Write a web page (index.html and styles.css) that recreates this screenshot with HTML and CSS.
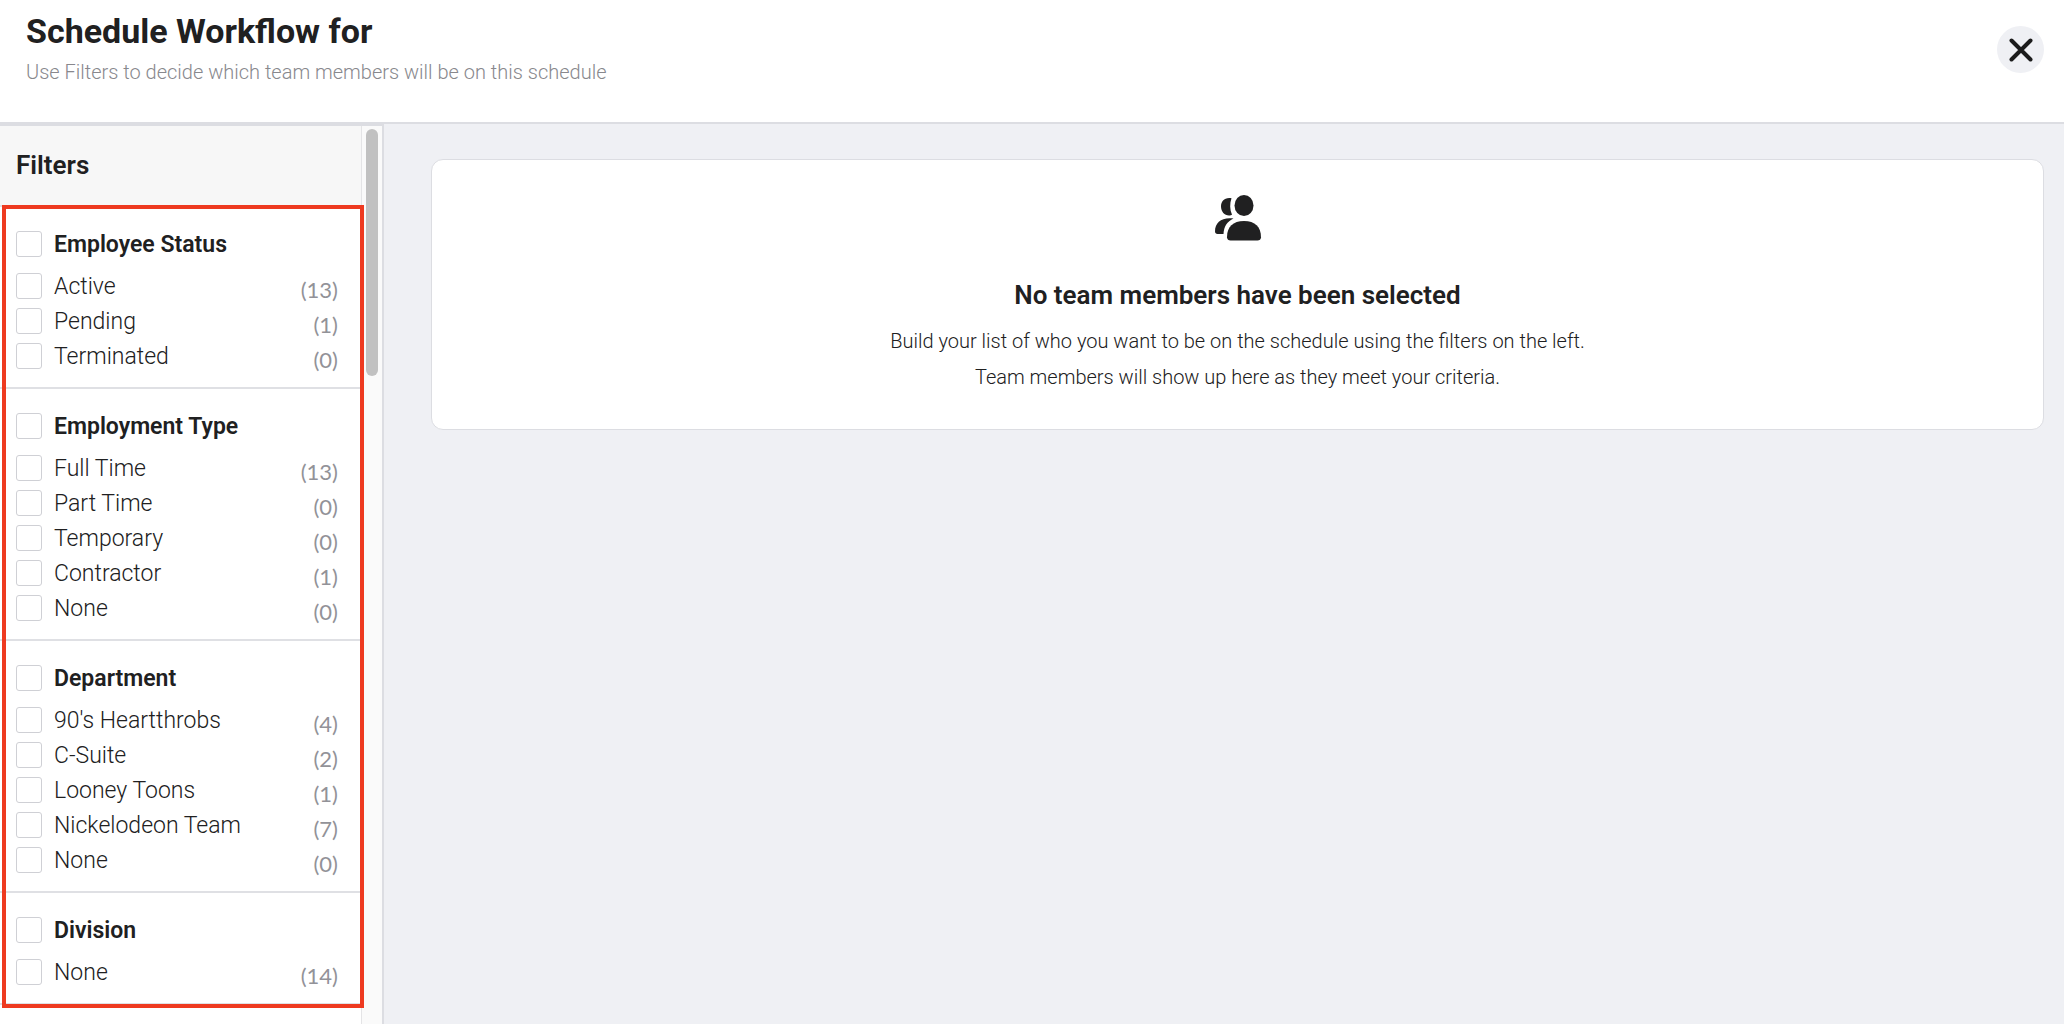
FILE: index.html
```html
<!DOCTYPE html>
<html lang="en">
<head>
<meta charset="utf-8">
<meta name="viewport" content="width=device-width, initial-scale=1">
<title>Schedule Workflow</title>
<link rel="stylesheet" href="styles.css">
</head>
<body>
<header class="page-header">
  <div>
    <h1 class="page-title">Schedule Workflow for</h1>
    <p class="page-subtitle">Use Filters to decide which team members will be on this schedule</p>
  </div>
  <button class="close-button" type="button" aria-label="Close">
    <svg viewBox="0 0 24 24" width="24" height="24" aria-hidden="true"><path d="M2.500 2.500 21.500 21.500M21.500 2.500 2.500 21.500"/></svg>
  </button>
</header>
<div class="workspace">
  <aside class="sidebar">
    <div class="filters">
      <h2 class="filters-title">Filters</h2>
      <div class="filter-groups">
        <section class="filter-group">
          <label class="filter-row filter-heading"><input type="checkbox"><span class="filter-name">Employee Status</span></label>
          <label class="filter-row"><input type="checkbox"><span class="filter-name">Active</span><span class="filter-count">(13)</span></label>
          <label class="filter-row"><input type="checkbox"><span class="filter-name">Pending</span><span class="filter-count">(1)</span></label>
          <label class="filter-row"><input type="checkbox"><span class="filter-name">Terminated</span><span class="filter-count">(0)</span></label>
        </section>
        <section class="filter-group">
          <label class="filter-row filter-heading"><input type="checkbox"><span class="filter-name">Employment Type</span></label>
          <label class="filter-row"><input type="checkbox"><span class="filter-name">Full Time</span><span class="filter-count">(13)</span></label>
          <label class="filter-row"><input type="checkbox"><span class="filter-name">Part Time</span><span class="filter-count">(0)</span></label>
          <label class="filter-row"><input type="checkbox"><span class="filter-name">Temporary</span><span class="filter-count">(0)</span></label>
          <label class="filter-row"><input type="checkbox"><span class="filter-name">Contractor</span><span class="filter-count">(1)</span></label>
          <label class="filter-row"><input type="checkbox"><span class="filter-name">None</span><span class="filter-count">(0)</span></label>
        </section>
        <section class="filter-group">
          <label class="filter-row filter-heading"><input type="checkbox"><span class="filter-name">Department</span></label>
          <label class="filter-row"><input type="checkbox"><span class="filter-name">90's Heartthrobs</span><span class="filter-count">(4)</span></label>
          <label class="filter-row"><input type="checkbox"><span class="filter-name">C-Suite</span><span class="filter-count">(2)</span></label>
          <label class="filter-row"><input type="checkbox"><span class="filter-name">Looney Toons</span><span class="filter-count">(1)</span></label>
          <label class="filter-row"><input type="checkbox"><span class="filter-name">Nickelodeon Team</span><span class="filter-count">(7)</span></label>
          <label class="filter-row"><input type="checkbox"><span class="filter-name">None</span><span class="filter-count">(0)</span></label>
        </section>
        <section class="filter-group">
          <label class="filter-row filter-heading"><input type="checkbox"><span class="filter-name">Division</span></label>
          <label class="filter-row"><input type="checkbox"><span class="filter-name">None</span><span class="filter-count">(14)</span></label>
        </section>
      </div>
    </div>
    <div class="scroll-track"><div class="scroll-thumb"></div></div>
  </aside>
  <main class="content">
    <section class="empty-card">
      <svg class="people-icon" viewBox="0 0 48 46" width="48" height="46" aria-hidden="true">
        <ellipse cx="30" cy="10.500" rx="9.500" ry="10.500"/>
        <path d="M17.500 3.200C10.500 2 7 6.500 7 11.500s3.500 9 8 9c1.300 0 2.400-.3 3-.8-2.300-5.300-2.300-11.200-.5-16.500Z"/>
        <path d="M19.500 23.500C8 22 1 27 1 36.500 1 38 2 39 3.500 39h6C10 31.500 13 26.500 19.500 23.500Z"/>
        <path d="M16.500 45.500c-2 0-3.500-1.300-3.500-3.300C13 32 19 26 30 26s17 6 17 16.200c0 2-1.500 3.300-3.500 3.300Z"/>
      </svg>
      <h2 class="empty-title">No team members have been selected</h2>
      <p class="empty-text">Build your list of who you want to be on the schedule using the filters on the left.<br>Team members will show up here as they meet your criteria.</p>
    </section>
  </main>
</div>
</body>
</html>
```
FILE: styles.css
```css
* { box-sizing: border-box; }

body {
  margin: 0;
  min-height: 100vh;
  display: flex;
  flex-direction: column;
  background: #fff;
  color: #202021;
  font-family: Roboto, "Liberation Sans", sans-serif;
  font-size: 23px;
  font-weight: 300;
}

h1, h2, p { margin: 0; }

.page-header {
  display: flex;
  align-items: flex-start;
  justify-content: space-between;
  padding: 11px 20px 33px 26px;
  border-bottom: 2px solid #dcdde2;
}

.page-title {
  font-size: 34px;
  line-height: 40px;
  font-weight: 700;
}

.page-subtitle {
  margin-top: 4px;
  font-size: 20px;
  line-height: 34px;
  color: #88888d;
}

.close-button {
  display: flex;
  align-items: center;
  justify-content: center;
  width: 47px;
  height: 47px;
  margin-top: 15px;
  padding: 0;
  border: 0;
  border-radius: 50%;
  background: #eff0f4;
}

.close-button path {
  fill: none;
  stroke: #1c1c1c;
  stroke-width: 4;
  stroke-linecap: round;
}

.workspace {
  flex: 1;
  display: flex;
}

.sidebar {
  flex: none;
  width: 384px;
  display: flex;
  border-top: 2px solid #dcdde2;
  border-right: 2px solid #dcdde2;
}

.filters { flex: 1; }

.filters-title {
  padding: 20px 16px 21px;
  border-bottom: 2px solid #dfe0e4;
  background: #f7f7f7;
  font-size: 26px;
  line-height: 38px;
  font-weight: 600;
}

.filter-groups { position: relative; }

/* Highlight frame drawn over the filter groups */
.filter-groups::after {
  content: "";
  position: absolute;
  inset: -2px -3px -3px 2px;
  border: 4px solid #ee3a20;
  pointer-events: none;
}

.filter-group {
  display: flex;
  flex-direction: column;
  gap: 9px;
  padding: 24px 23px 18px 16px;
  border-bottom: 2px solid #dfe0e4;
}

.filter-row {
  display: flex;
  align-items: center;
  gap: 12px;
  height: 26px;
}

.filter-heading {
  margin-bottom: 7px;
  font-weight: 600;
}

.filter-row input {
  appearance: none;
  flex: none;
  width: 26px;
  height: 26px;
  margin: 0;
  border: 1px solid #cfd0d5;
  border-radius: 3px;
  background: #fff;
}

.filter-name {
  flex: 1;
  padding-top: 2px;
  line-height: 28px;
}

.filter-count {
  padding-top: 6px;
  font-family: Lato, Roboto, sans-serif;
  font-size: 22px;
  font-weight: 400;
  color: #929298;
}

.scroll-track {
  width: 21px;
  padding: 3px 4px;
  border-left: 1px solid #e4e4e6;
  background: #fafafa;
}

.scroll-thumb {
  width: 12px;
  height: 247px;
  border-radius: 6px;
  background: #c1c1c1;
}

.content {
  flex: 1;
  padding: 35px 20px 35px 47px;
  background: #eff0f4;
}

.empty-card {
  display: flex;
  flex-direction: column;
  align-items: center;
  padding: 35px 24px 34px;
  border: 1px solid #dcdde2;
  border-radius: 12px;
  background: #fff;
  text-align: center;
}

.people-icon { fill: #202021; }

.empty-title {
  margin-top: 36px;
  font-size: 26px;
  line-height: 36px;
  font-weight: 600;
}

.empty-text {
  margin-top: 10px;
  font-size: 20px;
  line-height: 36px;
}
```
